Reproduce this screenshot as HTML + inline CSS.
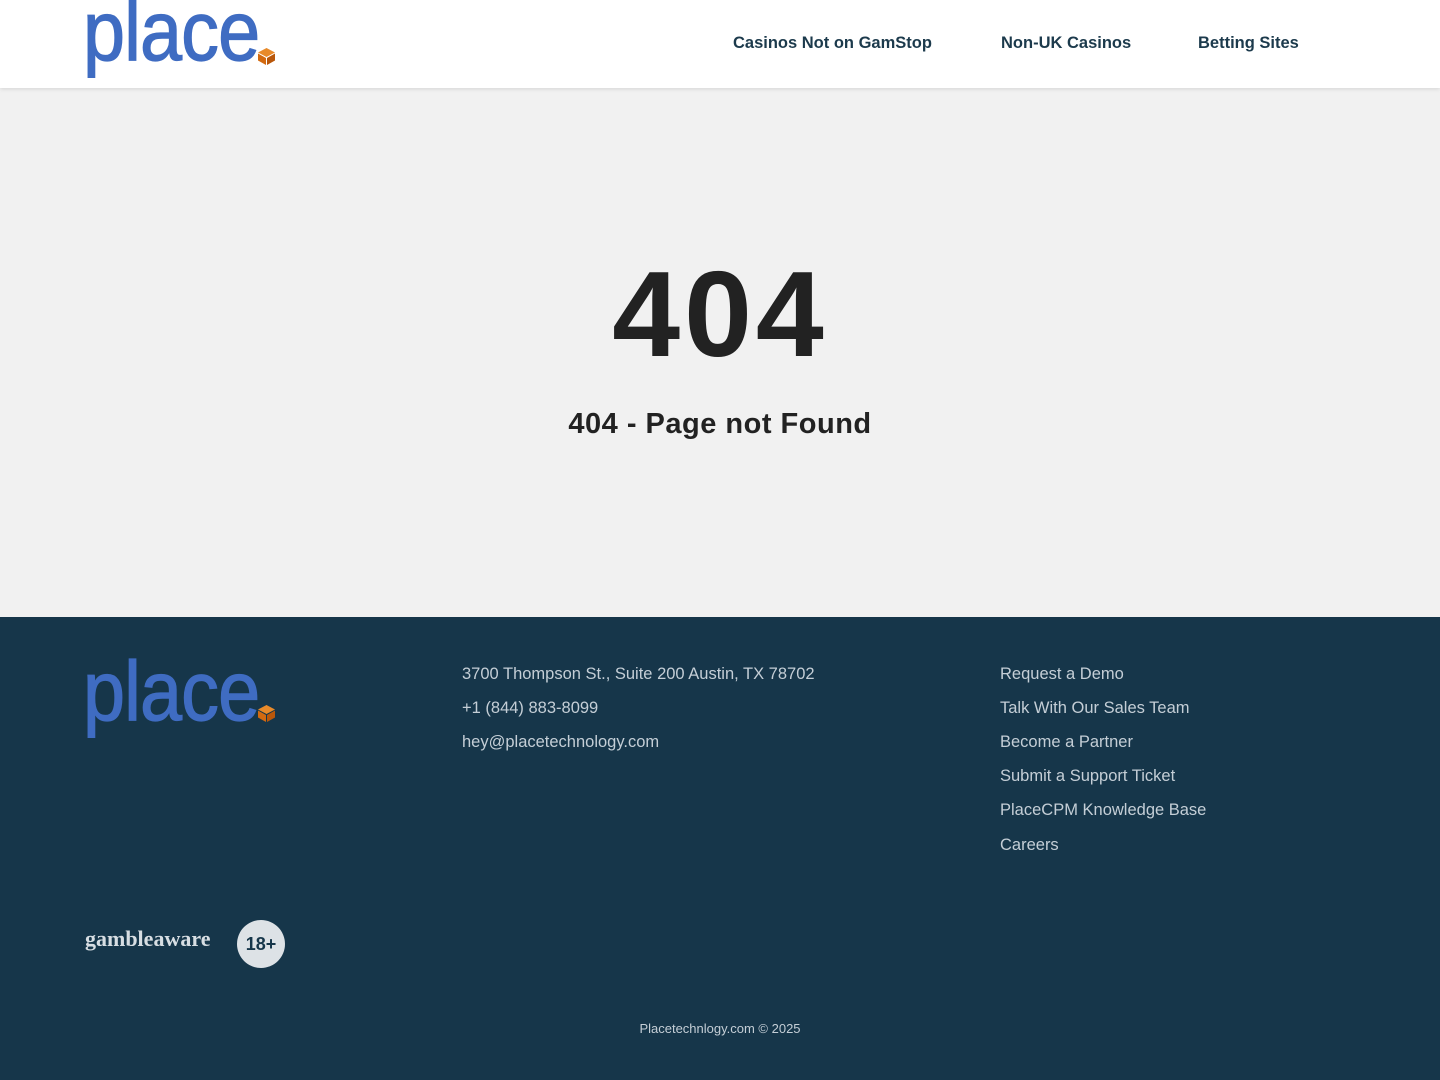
<!DOCTYPE html>
<html><head><meta charset="utf-8"><style>
*{margin:0;padding:0;box-sizing:border-box}
body{width:1440px;height:1080px;overflow:hidden;font-family:"Liberation Sans",sans-serif;background:#f1f1f1}
header{position:relative;height:88px;background:#fff;box-shadow:0 1px 4px rgba(0,0,0,.12);z-index:2}
.logo{position:absolute;left:83px;font-size:84px;color:#3f6cc2;letter-spacing:-1px;line-height:1;font-weight:normal;transform:scaleX(.9);transform-origin:left;-webkit-text-stroke:1.2px #3f6cc2}
.cube{position:absolute;width:17px;height:17px}
nav a{position:absolute;top:34px;font-size:16.5px;font-weight:bold;color:#1c3a4c;text-decoration:none}
main{height:529px;position:relative;text-align:center;color:#222}
.big{position:absolute;top:165px;width:100%;font-size:122px;font-weight:bold;line-height:1;letter-spacing:4px}
.sub{position:absolute;top:320px;width:100%;font-size:29px;font-weight:bold;letter-spacing:.5px}
footer{height:463px;background:#16364a;position:relative;color:#c4ced6;font-size:16.5px}
footer .l{position:absolute;left:462px}
footer .r{position:absolute;left:1000px}
footer p{position:absolute}
.ga{position:absolute;left:85px;top:309px;font-family:"Liberation Serif",serif;font-weight:bold;font-size:22px;color:#d7dee3;letter-spacing:0}
.age{position:absolute;left:237px;top:303px;width:48px;height:48px;border-radius:50%;background:#dde2e6;color:#16364a;font-weight:bold;font-size:18px;text-align:center;line-height:48px}
.copy{position:absolute;top:404px;width:100%;text-align:center;font-size:13px}
</style></head><body>
<header>
<div class="logo" style="top:-11px">place</div>
<svg class="cube" style="left:258px;top:48px" viewBox="0 0 17 17"><path d="M8.5 0L17 4.5 8.5 9 0 4.5Z" fill="#e88a2a"/><path d="M0 5.5L8 10V17L0 12.5Z" fill="#d36a10"/><path d="M17 5.5L9 10V17L17 12.5Z" fill="#b9570a"/></svg>
<nav><a style="left:733px">Casinos Not on GamStop</a><a style="left:1001px">Non-UK Casinos</a><a style="left:1198px">Betting Sites</a></nav>
</header>
<main><div class="big">404</div><div class="sub">404 - Page not Found</div></main>
<footer>
<div class="logo" style="top:32px">place</div>
<svg class="cube" style="left:258px;top:88px" viewBox="0 0 17 17"><path d="M8.5 0L17 4.5 8.5 9 0 4.5Z" fill="#e88a2a"/><path d="M0 5.5L8 10V17L0 12.5Z" fill="#d36a10"/><path d="M17 5.5L9 10V17L17 12.5Z" fill="#b9570a"/></svg>
<p class="l" style="top:48px">3700 Thompson St., Suite 200 Austin, TX 78702</p>
<p class="l" style="top:82px">+1 (844) 883-8099</p>
<p class="l" style="top:116px">hey@placetechnology.com</p>
<p class="r" style="top:48px">Request a Demo</p>
<p class="r" style="top:82px">Talk With Our Sales Team</p>
<p class="r" style="top:116px">Become a Partner</p>
<p class="r" style="top:150px">Submit a Support Ticket</p>
<p class="r" style="top:184px">PlaceCPM Knowledge Base</p>
<p class="r" style="top:219px">Careers</p>
<div class="ga">gambleaware</div>
<div class="age">18+</div>
<div class="copy">Placetechnlogy.com © 2025</div>
</footer>
</body></html>
